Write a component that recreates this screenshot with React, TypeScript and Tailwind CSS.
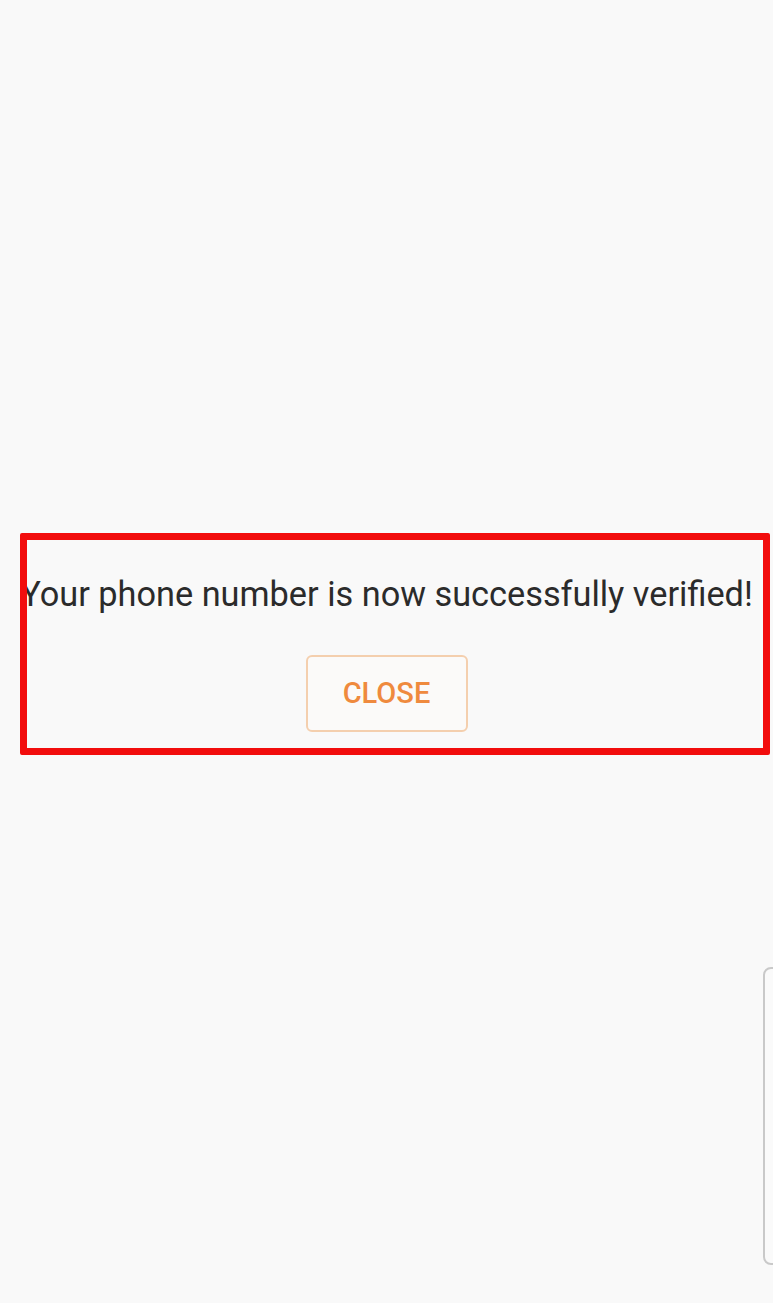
import React from "react";

export default function App() {
  return (
    <div
      className="relative w-[773px] h-[1303px] overflow-hidden bg-[#f9f9f9]"
      style={{ fontFamily: "Roboto, 'Noto Sans', sans-serif" }}
    >
      <div className="flex flex-col items-center pt-[570px]">
        <p className="text-[34.3px] leading-[48px] text-[#2b2b2b] whitespace-nowrap tracking-[0px]">
          Your phone number is now successfully verified!
        </p>
        <button className="mt-[37px] w-[162px] h-[77px] rounded-[6px] border-[2px] border-[#f4cfae] bg-[#fbfaf9] flex items-center justify-center">
          <span className="text-[29px] font-medium text-[#ef8a3e] leading-none">CLOSE</span>
        </button>
      </div>

      {/* annotation box */}
      <div className="absolute left-[20px] top-[533px] w-[750px] h-[222px] border-[7px] border-[#f20d0d] rounded-[2px] pointer-events-none" />

      {/* edge handle */}
      <div className="absolute left-[763px] top-[967px] w-[20px] h-[298px] rounded-[8px] border-[2px] border-[#c9c9c9] bg-[#fafafa]" />
    </div>
  );
}
